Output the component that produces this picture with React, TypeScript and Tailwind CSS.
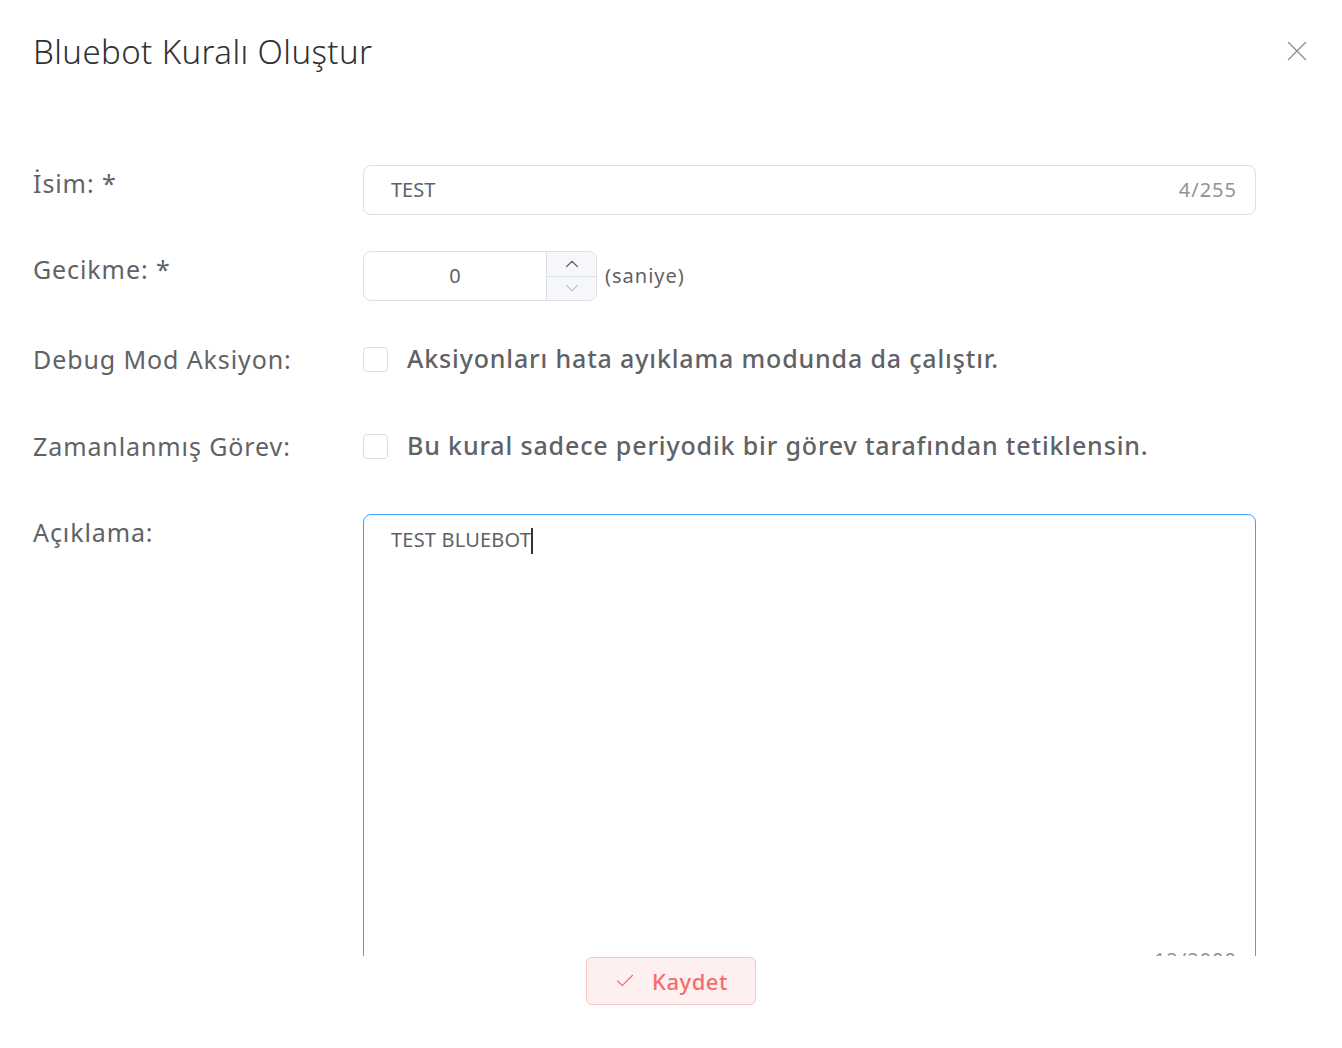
import { X, Check, ChevronUp, ChevronDown } from 'lucide-react'

const font = { fontFamily: '"Noto Sans", "Open Sans", sans-serif' }

function Label({ children }: { children: React.ReactNode }) {
  return <div className="w-[330px] shrink-0 text-[25px] leading-[36px] tracking-[0.9px] text-[#606266]">{children}</div>
}

function CheckRow({ label, text }: { label: string; text: string }) {
  return (
    <div className="flex items-center h-[50px]">
      <Label>{label}</Label>
      <div className="flex items-center">
        <span className="w-[25px] h-[25px] rounded-[4px] border border-[#dcdfe6] bg-white"></span>
        <span className="ml-[19px] text-[25px] font-medium tracking-[0.85px] text-[#606266]">{text}</span>
      </div>
    </div>
  )
}

export default function App() {
  return (
    <div className="h-screen flex flex-col bg-white" style={font}>
      <div className="flex items-start justify-between pl-[33px] pr-[28px] pt-[29px] h-[100px] shrink-0">
        <h1 className="text-[33px] font-light text-[#303133] leading-[46px] tracking-[0.4px]">
          Bluebot Kuralı Oluştur
        </h1>
        <X className="mt-[5px] w-[34px] h-[34px] text-[#909399]" strokeWidth={1} />
      </div>

      <div className="flex-1 overflow-hidden pl-[33px] pr-[86px] pt-[65px]">
        <div className="flex items-start">
          <Label>İsim: *</Label>
          <div className="flex-1 h-[50px] rounded-[8px] border border-[#dcdfe6] flex items-center px-[27px] pr-[18px]">
            <span className="flex-1 text-[20px] text-[#606266]">TEST</span>
            <span className="text-[20px] tracking-[1px] text-[#909399]">4/255</span>
          </div>
        </div>

        <div className="flex items-start mt-[36px]">
          <Label>Gecikme: *</Label>
          <div className="flex items-center">
            <div className="w-[234px] h-[50px] rounded-[8px] border border-[#dcdfe6] flex overflow-hidden">
              <div className="flex-1 flex items-center justify-center text-[20px] text-[#606266]">0</div>
              <div className="w-[50px] border-l border-[#dcdfe6] flex flex-col bg-[#f5f7fa]">
                <div className="flex-1 flex items-center justify-center border-b border-[#dcdfe6]">
                  <ChevronUp className="w-[22px] h-[22px] text-[#606266]" strokeWidth={1.2} />
                </div>
                <div className="flex-1 flex items-center justify-center">
                  <ChevronDown className="w-[22px] h-[22px] text-[#c0c4cc]" strokeWidth={1.2} />
                </div>
              </div>
            </div>
            <span className="ml-[8px] text-[20px] tracking-[1px] text-[#606266]">(saniye)</span>
          </div>
        </div>

        <div className="mt-[33px]">
          <CheckRow label="Debug Mod Aksiyon:" text="Aksiyonları hata ayıklama modunda da çalıştır." />
        </div>
        <div className="mt-[37px]">
          <CheckRow label="Zamanlanmış Görev:" text="Bu kural sadece periyodik bir görev tarafından tetiklensin." />
        </div>

        <div className="flex items-start mt-[43px]">
          <Label>Açıklama:</Label>
          <div className="flex-1 relative h-[470px] rounded-[8px] border border-[#409eff] px-[27px] pt-[10px]">
            <span className="text-[20px] tracking-[0.2px] text-[#606266]">TEST BLUEBOT</span>
            <span className="inline-block align-middle w-[2px] h-[26px] bg-[#303133] -mt-[4px]"></span>
            <span className="absolute right-[18px] bottom-[8px] text-[20px] tracking-[1px] text-[#909399]">12/2000</span>
          </div>
        </div>
      </div>

      <div className="h-[92px] shrink-0 flex justify-center pt-[1px]">
        <button className="w-[170px] h-[48px] rounded-[6px] border border-[#fbc4c4] bg-[#fef0f0] text-[#f56c6c] flex items-center justify-center gap-[16px]">
          <Check className="w-[22px] h-[22px]" strokeWidth={1.4} />
          <span className="text-[22px] font-medium tracking-[0.5px]">Kaydet</span>
        </button>
      </div>
    </div>
  )
}
